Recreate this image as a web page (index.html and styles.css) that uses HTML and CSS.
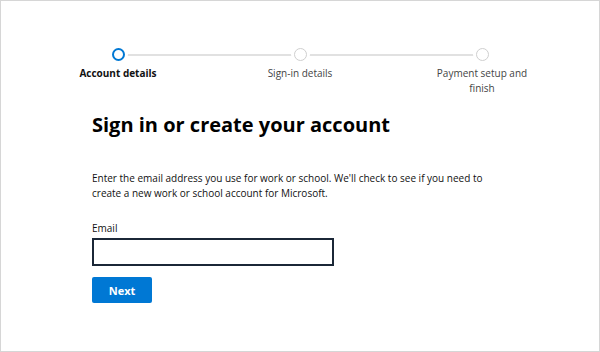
FILE: index.html
```html
<!DOCTYPE html>
<html lang="en">
<head>
    <meta charset="UTF-8">
    <title>Sign in or create your account</title>
    <link rel="stylesheet" href="styles.css">
</head>
<body>

<div class="frame">
    <ol class="stepper">
        <li class="step active">
            <span class="dot"></span>
            <span class="step-label">Account details</span>
        </li>
        <li class="step">
            <span class="dot"></span>
            <span class="step-label">Sign-in details</span>
        </li>
        <li class="step">
            <span class="dot"></span>
            <span class="step-label">Payment setup and finish</span>
        </li>
    </ol>

    <div class="content">
        <h1>Sign in or create your account</h1>
        <p class="intro">Enter the email address you use for work or school. We'll check to see if you need to create a new work or school account for Microsoft.</p>

        <label for="email" class="field-label">Email</label>
        <input type="email" id="email" class="field">

        <button class="primary">Next</button>
    </div>
</div>

</body>
</html>
```

FILE: styles.css
```css
* {
    box-sizing: border-box;
}
body {
    margin: 0;
    font-family: "Open Sans", "Noto Sans", sans-serif;
    color: #111;
    background: #fff;
}
.frame {
    width: 600px;
    height: 352px;
    border: 1px solid #d6d6d6;
    padding-top: 47px;
}
.stepper {
    list-style: none;
    margin: 0 auto;
    padding: 0;
    width: 546px;
    display: grid;
    grid-template-columns: repeat(3, 1fr);
}
.step {
    position: relative;
    display: flex;
    flex-direction: column;
    align-items: center;
    text-align: center;
}
.step + .step::before {
    content: "";
    position: absolute;
    top: 6px;
    left: -50%;
    width: 100%;
    height: 2px;
    background: #e1e1e1;
}
.dot {
    position: relative;
    z-index: 1;
    width: 13px;
    height: 13px;
    border-radius: 50%;
    border: 1.5px solid #cfcfcf;
    background: #fff;
    box-shadow: 0 0 0 3px #fff;
}
.step.active .dot {
    border: 2px solid #0078d4;
}
.step-label {
    margin-top: 5px;
    width: 110px;
    font-size: 10px;
    line-height: 15px;
    color: #444;
}
.step.active .step-label {
    font-weight: 700;
    color: #111;
}
.content {
    padding: 0 0 0 91px;
    margin-top: 14px;
}
h1 {
    margin: 0;
    font-size: 20px;
    line-height: 30px;
    font-weight: 700;
    color: #000;
}
.intro {
    margin: 31px 0 0;
    width: 420px;
    font-size: 10px;
    line-height: 15px;
}
.field-label {
    display: block;
    margin-top: 20px;
    font-size: 10px;
    line-height: 14px;
}
.field {
    display: block;
    margin-top: 3px;
    width: 242px;
    height: 28px;
    border: 2px solid #1b2737;
    padding: 0 8px;
    font-family: inherit;
    outline: none;
}
.primary {
    display: block;
    margin-top: 11px;
    width: 60px;
    height: 26px;
    border: none;
    border-radius: 2px;
    background: #0078d4;
    color: #fff;
    font-family: inherit;
    font-size: 11px;
    font-weight: 700;
    cursor: pointer;
}
```
